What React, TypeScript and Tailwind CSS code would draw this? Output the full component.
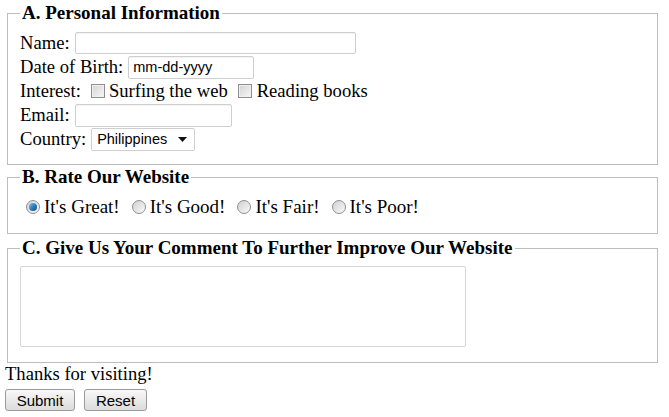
export default function App() {
  const inputCls =
    "h-[22px] border border-[#cfcfcf] rounded-[2px] bg-white shadow-[inset_0_1px_1px_rgba(0,0,0,0.06)] px-[4px] font-['Liberation_Sans',Arial,sans-serif] text-[14.5px] text-black outline-none";

  return (
    <div className="w-[669px] h-[417px] bg-white text-black pl-[5px] pt-[2px] font-['Liberation_Serif','Times_New_Roman',serif] text-[18.6px] leading-[22px]">
      {/* A */}
      <fieldset className="ml-[2px] w-[651px] border border-[#bdbdbd] px-[12px] pt-[7px] pb-[13px]">
        <legend className="px-[2px] font-bold text-[19px] leading-[22px]">
          A. Personal Information
        </legend>
        <div className="flex items-center h-[24px]">
          <span>Name:</span>
          <input className={`${inputCls} ml-[5px] w-[281px]`} />
        </div>
        <div className="flex items-center h-[24px]">
          <span>Date of Birth:</span>
          <input
            className={`${inputCls} ml-[5px] w-[126px] h-[23px]`}
            defaultValue="mm-dd-yyyy"
          />
        </div>
        <div className="flex items-center h-[24px]">
          <span>Interest:</span>
          <Check className="ml-[10px]" />
          <span className="ml-[4px]">Surfing the web</span>
          <Check className="ml-[10px]" />
          <span className="ml-[5px]">Reading books</span>
        </div>
        <div className="flex items-center h-[24px]">
          <span>Email:</span>
          <input className={`${inputCls} ml-[5px] w-[157px] h-[23px]`} />
        </div>
        <div className="flex items-center h-[24px]">
          <span>Country:</span>
          <div className="ml-[5px] w-[104px] h-[23px] border border-[#cfcfcf] rounded-[2px] bg-white flex items-center pl-[5px] pr-[7px] justify-between font-['Liberation_Sans',Arial,sans-serif] text-[14.5px]">
            <span>Philippines</span>
            <svg width="9" height="5" viewBox="0 0 9 5">
              <polygon points="0,0 9,0 4.5,5" fill="#111" />
            </svg>
          </div>
        </div>
      </fieldset>

      {/* B */}
      <fieldset className="ml-[2px] mt-[1px] w-[651px] border border-[#bdbdbd] px-[12px] pt-[7px] pb-[14px]">
        <legend className="px-[2px] font-bold text-[19px] leading-[22px]">
          B. Rate Our Website
        </legend>
        <div className="flex items-center h-[24px] pl-[6px] text-[19px]">
          <Radio checked />
          <span className="ml-[4px]">It's Great!</span>
          <Radio className="ml-[12px]" />
          <span className="ml-[4px]">It's Good!</span>
          <Radio className="ml-[12px]" />
          <span className="ml-[4px]">It's Fair!</span>
          <Radio className="ml-[12px]" />
          <span className="ml-[4px]">It's Poor!</span>
        </div>
      </fieldset>

      {/* C */}
      <fieldset className="ml-[2px] mt-[3px] w-[651px] border border-[#bdbdbd] px-[12px] pt-[7px] pb-[15px]">
        <legend className="px-[2px] font-bold text-[19px] leading-[22px]">
          C. Give Us Your Comment To Further Improve Our Website
        </legend>
        <textarea className="block w-[446px] h-[81px] border border-[#d6d6d6] rounded-[2px] bg-white resize-none outline-none" />
      </fieldset>

      <p className="leading-[22px]">Thanks for visiting!</p>
      <div className="flex gap-[9px] mt-[4px]">
        <Btn className="w-[70px]">Submit</Btn>
        <Btn className="w-[63px]">Reset</Btn>
      </div>
    </div>
  );
}

function Check({ className = "" }: { className?: string }) {
  return (
    <span
      className={`${className} inline-block w-[14px] h-[14px] border border-[#8e8e8e] bg-gradient-to-br from-[#d4d4d4] to-[#f7f7f7] shadow-[inset_0_0_0_1px_#f0f0f0]`}
    />
  );
}

function Radio({
  checked = false,
  className = "",
}: {
  checked?: boolean;
  className?: string;
}) {
  return (
    <span
      className={`${className} w-[14px] h-[14px] rounded-full border border-[#8f8f8f] bg-gradient-to-br from-[#d0d0d0] to-[#fafafa] flex items-center justify-center`}
    >
      {checked && (
        <span className="w-[8px] h-[8px] rounded-full bg-gradient-to-br from-[#7fc4ea] via-[#2a7fbf] to-[#0f4d80]" />
      )}
    </span>
  );
}

function Btn({
  children,
  className = "",
}: {
  children: React.ReactNode;
  className?: string;
}) {
  return (
    <button
      className={`${className} h-[22px] border border-[#9a9a9a] rounded-[3px] bg-gradient-to-b from-[#f8f8f8] to-[#dcdcdc] font-['Liberation_Sans',Arial,sans-serif] text-[15px] leading-none text-black`}
    >
      {children}
    </button>
  );
}
